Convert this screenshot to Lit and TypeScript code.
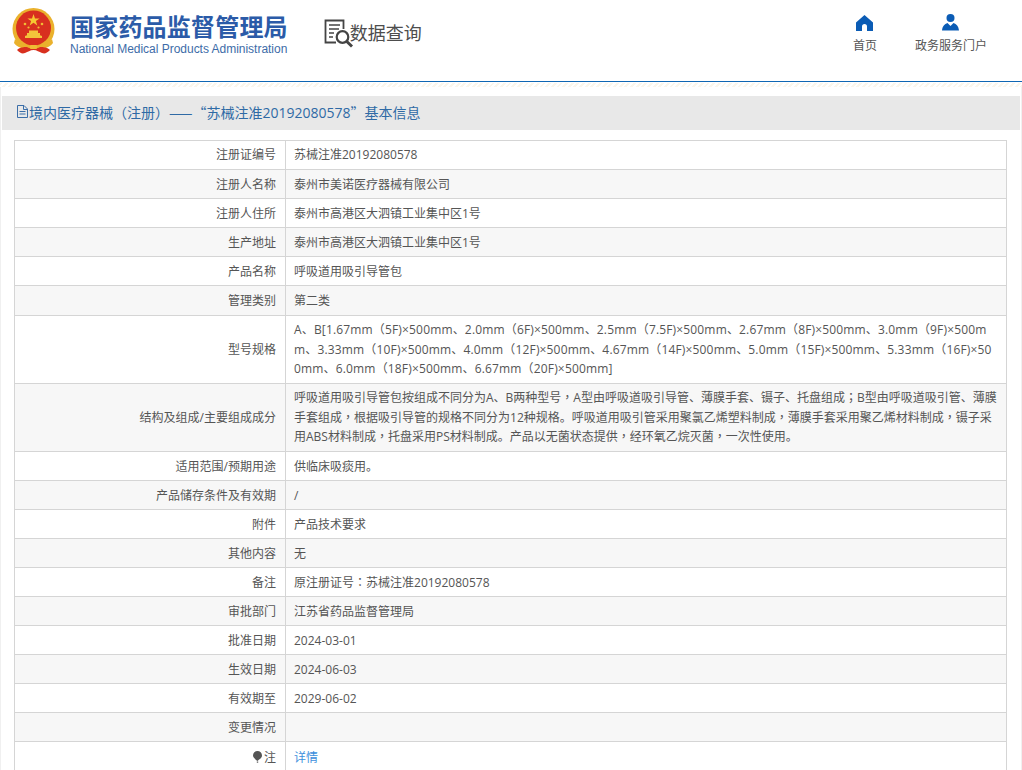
import { LitElement, html, css, svg, nothing } from "lit";
import { customElement } from "lit/decorators.js";

const rows: [string, string][] = [
  ["注册证编号", "苏械注准20192080578"],
  ["注册人名称", "泰州市美诺医疗器械有限公司"],
  ["注册人住所", "泰州市高港区大泗镇工业集中区1号"],
  ["生产地址", "泰州市高港区大泗镇工业集中区1号"],
  ["产品名称", "呼吸道用吸引导管包"],
  ["管理类别", "第二类"],
  ["型号规格", "A、B[1.67mm（5F)×500mm、2.0mm（6F)×500mm、2.5mm（7.5F)×500mm、2.67mm（8F)×500mm、3.0mm（9F)×500m\nm、3.33mm（10F)×500mm、4.0mm（12F)×500mm、4.67mm（14F)×500mm、5.0mm（15F)×500mm、5.33mm（16F)×50\n0mm、6.0mm（18F)×500mm、6.67mm（20F)×500mm]"],
  ["结构及组成/主要组成成分", "呼吸道用吸引导管包按组成不同分为A、B两种型号，A型由呼吸道吸引导管、薄膜手套、镊子、托盘组成；B型由呼吸道吸引管、薄膜\n手套组成，根据吸引导管的规格不同分为12种规格。呼吸道用吸引管采用聚氯乙烯塑料制成，薄膜手套采用聚乙烯材料制成，镊子采\n用ABS材料制成，托盘采用PS材料制成。产品以无菌状态提供，经环氧乙烷灭菌，一次性使用。"],
  ["适用范围/预期用途", "供临床吸痰用。"],
  ["产品储存条件及有效期", "/"],
  ["附件", "产品技术要求"],
  ["其他内容", "无"],
  ["备注", "原注册证号：苏械注准20192080578"],
  ["审批部门", "江苏省药品监督管理局"],
  ["批准日期", "2024-03-01"],
  ["生效日期", "2024-06-03"],
  ["有效期至", "2029-06-02"],
  ["变更情况", ""],
];

const punct = (text: string) =>
  text
    .split(/([，（）：；“”—])/)
    .map((part, i) =>
      i % 2
        ? html`<span class=${part === "（" || part === "）" ? "paren" : "p"}>${part}</span>`
        : part || nothing
    );

const rowClass = (label: string, value: string) => {
  if (value.includes("\n")) return label === "型号规格" ? "multi spec" : "multi";
  return label === "管理类别" ? "tall" : "";
};

const emblem = svg`<svg width="46" height="48" viewBox="0 0 46 48">
  <circle cx="22.500" cy="21" r="21" fill="#eab12c"/>
  <circle cx="22.500" cy="20" r="17.500" fill="#d8301f"/>
  <path d="M22.500 6l1.500 4.400h4.600l-3.700 2.700 1.400 4.400-3.800-2.700-3.800 2.700 1.400-4.400-3.700-2.700h4.600z" fill="#f5c832"/>
  <g fill="#f0bd35"><circle cx="14" cy="16" r="1.300"/><circle cx="31" cy="16" r="1.300"/><circle cx="17.500" cy="19.500" r="1.100"/><circle cx="27.500" cy="19.500" r="1.100"/></g>
  <path d="M14 30h17v-2l-2-.8v-2.200h-2v-2.500h-9v2.500h-2v2.200l-2 .8z" fill="#f3c33b"/>
  <path d="M4 31c4 5 10 7 18.500 7s14.500-2 18.500-7l1 4c-3 4-9 6-13 6h-13c-4 0-10-2-13-6z" fill="#eab12c"/>
  <path d="M6 42c3-3 7-3 10-3 3 2 10 2 13 0 3 0 7 0 10 3-3 3-5 4-8 3-3-1-5-3-8.500-3s-5.500 2-8.500 3c-3 1-5 0-8-3z" fill="#d8301f"/>
  <rect x="19" y="37" width="7" height="4" rx="1" fill="#f0bd35"/>
</svg>`;

const queryIcon = svg`<svg width="30" height="30" viewBox="0 0 30 30" fill="none" stroke="#444">
  <path d="M12 24.500H1.500V2.500H19.500V11" stroke-width="1.800"/>
  <path d="M5 7H16M5 11H15M5 15H10M5 19H9" stroke-width="1.500"/>
  <circle cx="18.500" cy="19" r="5.800" stroke-width="2.200"/>
  <path d="M22.800 23.500L28 28.500" stroke-width="3"/>
</svg>`;

const homeIcon = svg`<svg width="17" height="16" viewBox="0 0 17 16" fill="#0b5cb5">
  <path d="M8.500 0L17 7.500V16H11V11.500A2.500 2.500 0 0 0 6 11.500V16H0V7.500z"/>
</svg>`;

const userIcon = svg`<svg width="17" height="17" viewBox="0 0 17 17" fill="#0b5cb5">
  <circle cx="8.500" cy="4" r="4"/>
  <path d="M0 16.500C.5 12 2.500 10 5.500 9L8.500 12 11.500 9C14.500 10 16.500 12 17 16.500z"/>
</svg>`;

const docIcon = svg`<svg width="11" height="13" viewBox="0 0 11 13" fill="none" stroke="#3b6ea8">
  <path d="M.5.500H7L10.500 4V12.500H.5z"/><path d="M6.500.500V4.500H10.500M2.500 6.500H8.500M2.500 9H8.500"/>
</svg>`;

const pinIcon = svg`<svg width="9" height="12" viewBox="0 0 9 12" fill="#555">
  <path d="M4.500 0A4.500 4.500 0 0 1 9 4.500C9 7 6 8.500 4.500 10 3 8.500 0 7 0 4.500A4.500 4.500 0 0 1 4.500 0z"/>
  <rect x="3.800" y="10.500" width="1.400" height="1.200"/>
</svg>`;

@customElement("app-root")
export class AppRoot extends LitElement {
  static styles = css`
    :host {
      display: block;
      font-family: "Open Sans", "Noto Sans CJK SC", sans-serif;
      font-size: 12px;
      color: #555;
      background: #fff;
      height: 770px;
      overflow: hidden;
    }
    .p { font-family: "Noto Sans CJK TC", sans-serif; line-height: 0; }
    .paren { font-family: "Noto Sans CJK KR", sans-serif; line-height: 0; }
    .header {
      height: 82px;
      box-sizing: border-box;
      border-bottom: 1px solid #0f66b3;
      display: flex;
      align-items: flex-start;
      padding: 8px 0 0 11px;
    }
    .emblem { display: block; width: 46px; height: 48px; }
    .brand {
      margin-left: 13px;
      display: flex;
      flex-direction: column;
    }
    .brand-cn {
      font-family: "Noto Sans CJK SC", sans-serif;
      font-size: 24px;
      font-weight: 700;
      letter-spacing: 0.2px;
      line-height: 32px;
      color: #2b5ba8;
      margin-top: 2px;
    }
    .brand-en {
      font-family: "Liberation Sans", sans-serif;
      font-size: 12px;
      letter-spacing: -0.02px;
      line-height: 16px;
      color: #3d6ca8;
      margin-top: -1px;
      white-space: nowrap;
    }
    .query {
      display: flex;
      align-items: center;
      margin-left: 36px;
      margin-top: 10px;
    }
    .query span {
      font-family: "Noto Sans CJK SC", sans-serif;
      font-size: 18px;
      line-height: 26px;
      color: #4d4d4d;
      margin-left: -4px;
      margin-bottom: 2px;
    }
    .nav {
      margin-left: auto;
      display: flex;
      margin-right: 35px;
      gap: 38px;
      margin-top: 6px;
    }
    .nav-item {
      display: flex;
      flex-direction: column;
      align-items: center;
      gap: 7px;
      line-height: 16px;
      color: #555;
    }
    .nav-icon { height: 17px; display: flex; align-items: flex-end; }
    .hatch {
      height: 4px;
      margin-top: 1px;
      background: repeating-linear-gradient(135deg, #faf6ec 0 2px, #ffffff 2px 4px);
    }
    .content { height: 683px; padding: 9px 1px 0; box-sizing: border-box; border-left: 1px solid #f0f0f0; border-right: 1px solid #f0f0f0; }
    .title {
      height: 34px;
      box-sizing: border-box;
      background: #e8e8e8;
      display: flex;
      align-items: center;
      padding: 0 0 3px 15px;
      font-size: 14px;
      color: #2f6aa5;
      gap: 1px;
    }
    table {
      margin: 10px 15px 0 12px;
      width: 993px;
      border-collapse: collapse;
      table-layout: fixed;
    }
    td {
      border: 1px solid #d5d5d5;
      padding: 5.25px 9px 3.25px 8px;
      line-height: 19.5px;
      vertical-align: middle;
    }
    td.label { box-sizing: content-box; width: 252px; padding-left: 9px; text-align: right; }
    tr:first-child td, tr.multi td { padding-top: 4.25px; padding-bottom: 4.25px; }
    tr.tall td { padding-bottom: 4.25px; }
    tr:last-child td { padding-top: 6.25px; }
    tr:nth-child(even) td { background: #f7f7f7; }
    tr.spec .line { letter-spacing: 0.16px; }
    .line { display: block; white-space: nowrap; }
    .pin { display: inline-flex; vertical-align: -1px; margin-right: 2px; }
    a { color: #3d8fdc; text-decoration: none; }
  `;

  private value(v: string) {
    if (!v) return nothing;
    if (!v.includes("\n")) return punct(v);
    return v.split("\n").map((line) => html`<span class="line">${punct(line)}</span>`);
  }

  render() {
    return html`
      <div class="header">
        <div class="emblem">${emblem}</div>
        <div class="brand">
          <div class="brand-cn">国家药品监督管理局</div>
          <div class="brand-en">National Medical Products Administration</div>
        </div>
        <div class="query">${queryIcon}<span>数据查询</span></div>
        <div class="nav">
          <div class="nav-item"><div class="nav-icon">${homeIcon}</div>首页</div>
          <div class="nav-item"><div class="nav-icon">${userIcon}</div>政务服务门户</div>
        </div>
      </div>
      <div class="hatch"></div>
      <div class="content">
        <div class="title">${docIcon}<span>${punct("境内医疗器械（注册）——“苏械注准20192080578”基本信息")}</span></div>
        <table>
          <tbody>
            ${rows.map(([k, v]) => html`<tr class=${rowClass(k, v)}><td class="label">${k}</td><td>${this.value(v)}</td></tr>`)}
            <tr><td class="label"><span class="pin">${pinIcon}</span>注</td><td><a href="#">详情</a></td></tr>
          </tbody>
        </table>
      </div>
    `;
  }
}
